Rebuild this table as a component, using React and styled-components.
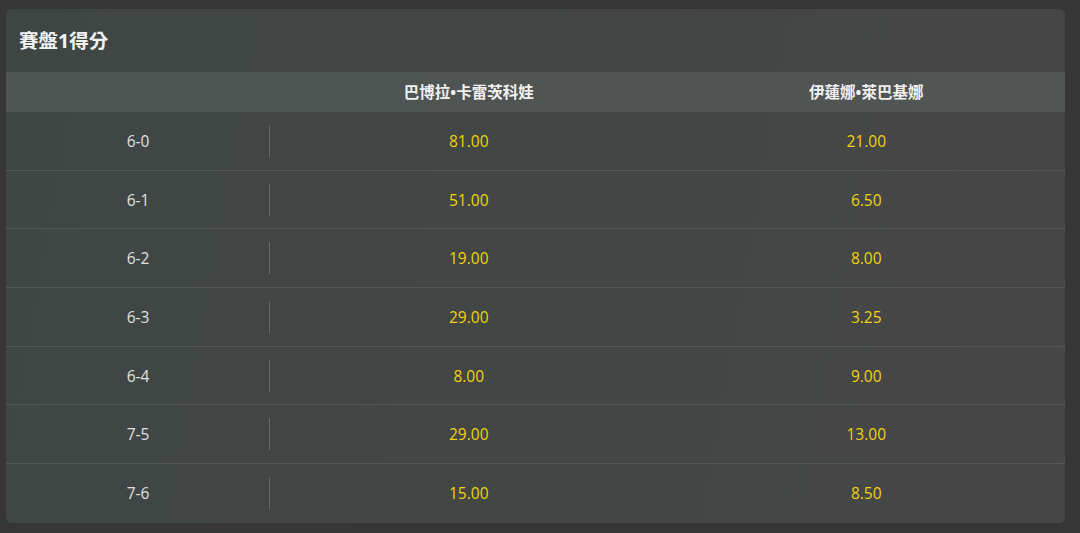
import React from "react";
import styled, { createGlobalStyle } from "styled-components";

const Global = createGlobalStyle`
  html, body { margin: 0; padding: 0; background: #363636; }
  body { font-family: "Open Sans", "Noto Sans CJK TC", sans-serif; }
`;

const Page = styled.div`
  padding: 9px 15px 10px 6px;
  height: 533px;
  box-sizing: border-box;
`;

const Card = styled.div`
  border-radius: 6px;
  overflow: hidden;
  background: linear-gradient(100deg, #3e4644 0%, #434645 50%, #474747 100%);
`;

const Title = styled.div`
  height: 63px;
  display: flex;
  align-items: center;
  padding-left: 13px;
  font-family: "Open Sans", "Noto Sans CJK TC", sans-serif;
  font-weight: 700;
  font-size: 19.5px;
  color: #f2f2f2;
  padding-bottom: 2px;
  box-sizing: border-box;
`;

const Grid = styled.div`
  display: grid;
  grid-template-columns: 264px 1fr 1fr;
`;

const HeadRow = styled(Grid)`
  height: 40px;
  background: linear-gradient(90deg, #4d5451 0%, #515554 100%);
`;

const HeadCell = styled.div`
  display: flex;
  align-items: center;
  justify-content: center;
  font-family: "Open Sans", "Noto Sans CJK TC", sans-serif;
  font-weight: 700;
  font-size: 15.5px;
  color: #f0f0f0;
  padding-bottom: 2px;
`;

const Row = styled(Grid)`
  height: 58.7px;
  border-bottom: ${(p) => (p.$last ? "none" : "1px solid #545957")};
  box-sizing: border-box;
`;

const Cell = styled.div`
  position: relative;
  display: flex;
  align-items: center;
  justify-content: center;
  font-size: 15.5px;
  color: ${(p) => (p.$odds ? "#f2d20c" : "#e0e0e0")};
  ${(p) =>
    p.$divider &&
    `&::after {
      content: "";
      position: absolute;
      right: 0;
      top: 50%;
      transform: translateY(-50%);
      width: 1px;
      height: 32px;
      background: #666b69;
    }`}
`;

const rows = [
  ["6-0", "81.00", "21.00"],
  ["6-1", "51.00", "6.50"],
  ["6-2", "19.00", "8.00"],
  ["6-3", "29.00", "3.25"],
  ["6-4", "8.00", "9.00"],
  ["7-5", "29.00", "13.00"],
  ["7-6", "15.00", "8.50"],
];

export default function App() {
  return (
    <>
      <Global />
      <Page>
        <Card>
          <Title>賽盤1得分</Title>
          <HeadRow>
            <HeadCell />
            <HeadCell>巴博拉•卡雷茨科娃</HeadCell>
            <HeadCell>伊蓮娜•萊巴基娜</HeadCell>
          </HeadRow>
          {rows.map((r, i) => (
            <Row key={r[0]} $last={i === rows.length - 1}>
              <Cell $divider>{r[0]}</Cell>
              <Cell $odds>{r[1]}</Cell>
              <Cell $odds>{r[2]}</Cell>
            </Row>
          ))}
        </Card>
      </Page>
    </>
  );
}
